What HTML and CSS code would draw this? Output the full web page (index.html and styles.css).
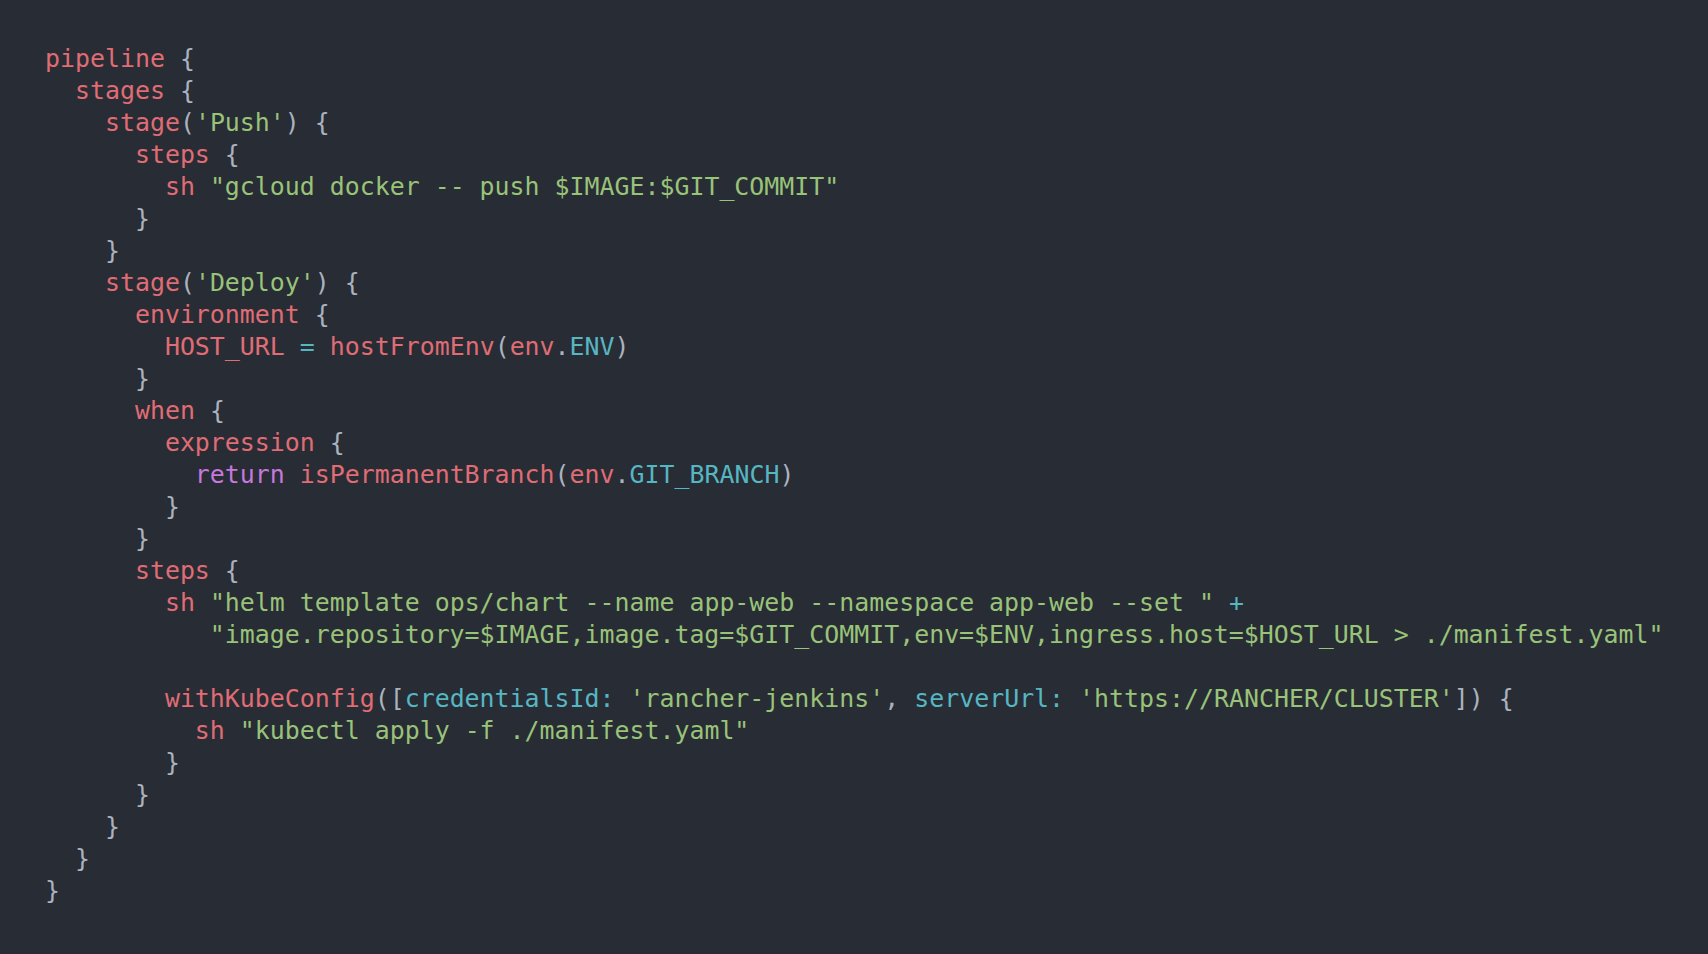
FILE: index.html
```html
<!DOCTYPE html>
<html lang="en">
<head>
<meta charset="utf-8">
<title>Jenkinsfile</title>
<link rel="stylesheet" href="styles.css">
</head>
<body>
<main class="editor">
<pre class="code"><code><span class="r">pipeline</span> <span class="p">{</span>
  <span class="r">stages</span> <span class="p">{</span>
    <span class="r">stage</span><span class="p">(</span><span class="g">'Push'</span><span class="p">) {</span>
      <span class="r">steps</span> <span class="p">{</span>
        <span class="r">sh</span> <span class="g">"gcloud docker -- push $IMAGE:$GIT_COMMIT"</span>
      <span class="p">}</span>
    <span class="p">}</span>
    <span class="r">stage</span><span class="p">(</span><span class="g">'Deploy'</span><span class="p">) {</span>
      <span class="r">environment</span> <span class="p">{</span>
        <span class="r">HOST_URL</span> <span class="c">=</span> <span class="r">hostFromEnv</span><span class="p">(</span><span class="r">env</span><span class="p">.</span><span class="c">ENV</span><span class="p">)</span>
      <span class="p">}</span>
      <span class="r">when</span> <span class="p">{</span>
        <span class="r">expression</span> <span class="p">{</span>
          <span class="m">return</span> <span class="r">isPermanentBranch</span><span class="p">(</span><span class="r">env</span><span class="p">.</span><span class="c">GIT_BRANCH</span><span class="p">)</span>
        <span class="p">}</span>
      <span class="p">}</span>
      <span class="r">steps</span> <span class="p">{</span>
        <span class="r">sh</span> <span class="g">"helm template ops/chart --name app-web --namespace app-web --set "</span> <span class="c">+</span>
           <span class="g">"image.repository=$IMAGE,image.tag=$GIT_COMMIT,env=$ENV,ingress.host=$HOST_URL &gt; ./manifest.yaml"</span>

        <span class="r">withKubeConfig</span><span class="p">([</span><span class="c">credentialsId:</span> <span class="g">'rancher-jenkins'</span><span class="p">,</span> <span class="c">serverUrl:</span> <span class="g">'https://RANCHER/CLUSTER'</span><span class="p">]) {</span>
          <span class="r">sh</span> <span class="g">"kubectl apply -f ./manifest.yaml"</span>
        <span class="p">}</span>
      <span class="p">}</span>
    <span class="p">}</span>
  <span class="p">}</span>
<span class="p">}</span></code></pre>
</main>
</body>
</html>
```
FILE: styles.css
```css
html, body {
  margin: 0;
  padding: 0;
  background: #282c34;
}

.editor {
  box-sizing: border-box;
  width: 1708px;
  height: 954px;
  padding: 43px 0 0 45px;
  background: #282c34;
  overflow: hidden;
}

.code {
  margin: 0;
  font-family: "DejaVu Sans Mono", "Liberation Mono", monospace;
  font-size: 24.9px;
  line-height: 32px;
  color: #abb2bf;
  white-space: pre;
}

.r { color: #e06c75; }
.g { color: #98c379; }
.c { color: #56b6c2; }
.m { color: #c678dd; }
.p { color: #abb2bf; }
```
